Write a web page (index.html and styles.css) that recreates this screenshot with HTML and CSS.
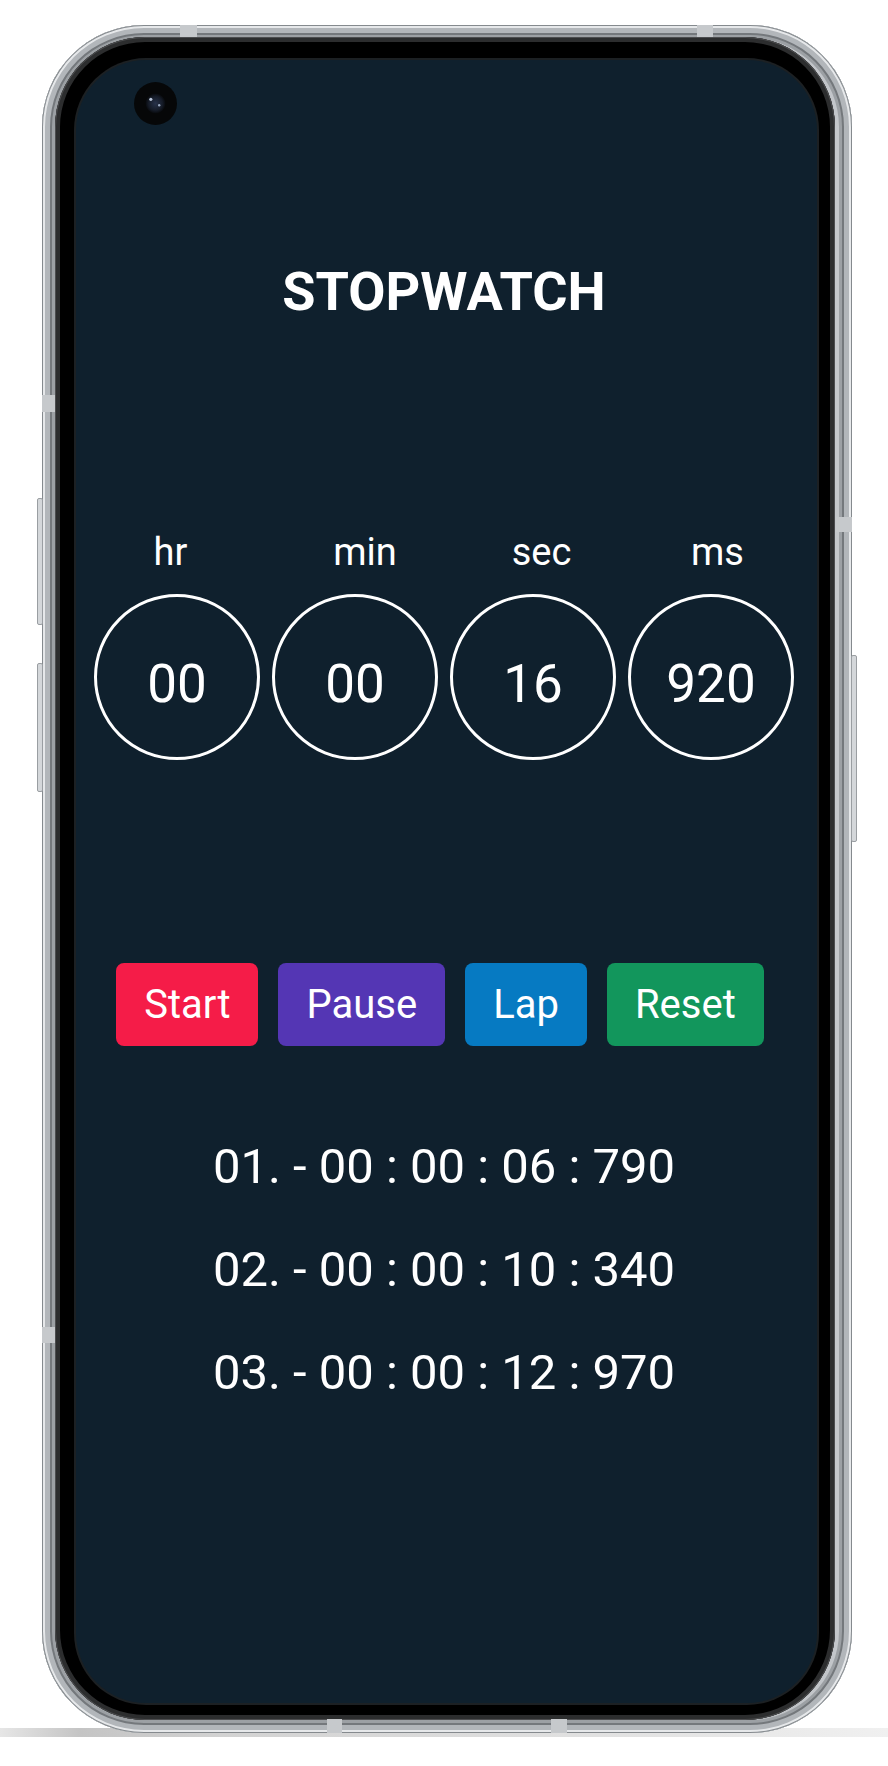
FILE: index.html
```html
<!DOCTYPE html>
<html lang="en">
<head>
<meta charset="utf-8">
<title>Stopwatch</title>
<link rel="stylesheet" href="styles.css">
</head>
<body>
<div class="floor"></div>
<div class="stage">
  <div class="phone">
    <span class="key key-l1"></span>
    <span class="key key-l2"></span>
    <span class="key key-r1"></span>
    <span class="band band-t1"></span>
    <span class="band band-t2"></span>
    <span class="band band-b1"></span>
    <span class="band band-b2"></span>
    <span class="band band-l1"></span>
    <span class="band band-l2"></span>
    <span class="band band-r1"></span>
    <div class="bezel">
      <main class="screen">
        <div class="camera">
          <svg width="43" height="43" viewBox="0 0 43 43">
            <defs>
              <radialGradient id="lens" cx="50%" cy="50%" r="50%">
                <stop offset="0%" stop-color="#27324a"/>
                <stop offset="70%" stop-color="#151b27"/>
                <stop offset="100%" stop-color="#07090c"/>
              </radialGradient>
            </defs>
            <circle cx="21.5" cy="21.5" r="21.5" fill="#060708"/>
            <circle cx="21.5" cy="21.5" r="10" fill="url(#lens)"/>
            <circle cx="16.8" cy="17.3" r="1.6" fill="#b8c4d8"/>
            <circle cx="25.2" cy="23.2" r="1.2" fill="#9aa8c0"/>
          </svg>
        </div>
        <h1 class="title">STOPWATCH</h1>
        <div class="labels">
          <span class="label label-hr">hr</span>
          <span class="label label-min">min</span>
          <span class="label label-sec">sec</span>
          <span class="label label-ms">ms</span>
        </div>
        <div class="dials">
          <div class="dial">00</div>
          <div class="dial">00</div>
          <div class="dial">16</div>
          <div class="dial">920</div>
        </div>
        <div class="controls">
          <button class="btn btn-start">Start</button>
          <button class="btn btn-pause">Pause</button>
          <button class="btn btn-lap">Lap</button>
          <button class="btn btn-reset">Reset</button>
        </div>
        <ol class="laps">
          <li>01. - 00 : 00 : 06 : 790</li>
          <li>02. - 00 : 00 : 10 : 340</li>
          <li>03. - 00 : 00 : 12 : 970</li>
        </ol>
      </main>
    </div>
  </div>
</div>
</body>
</html>
```

FILE: styles.css
```css
* { box-sizing: border-box; }

html, body { margin: 0; padding: 0; }

body {
  width: 888px;
  height: 1766px;
  background: #ffffff;
  position: relative;
  overflow: hidden;
  font-family: Roboto, "Liberation Sans", sans-serif;
}

.floor {
  position: absolute;
  left: 0;
  right: 0;
  top: 1728px;
  height: 9px;
  background: linear-gradient(to right, #e6e6e6 0%, #c4c4c4 9%, #d2d2d2 25%, #e2e2e2 70%, #f0f0f0 100%);
}

.stage {
  position: relative;
  padding: 25px 0 0 42px;
}

.phone {
  position: relative;
  width: 810px;
  height: 1708px;
  border-radius: 102px;
  padding: 12px 17px 13px 13px;
  background: linear-gradient(90deg, #c4c7cb 0%, #a9adb1 50%, #c4c7cb 100%);
  box-shadow:
    inset 0 0 0 1px #858a8e,
    inset 0 0 0 3px #e6e8ea,
    inset 0 0 0 8px #b2b6ba,
    inset 0 0 0 10px #74787c,
    inset 0 0 0 13px #9ca0a4;
}

.key {
  position: absolute;
  width: 6px;
  border-radius: 2px;
  background: #d4d7da;
  border: 1px solid #9a9ea2;
}
.key-l1 { left: -5px; top: 473px; height: 127px; }
.key-l2 { left: -5px; top: 638px; height: 129px; }
.key-r1 { right: -5px; top: 630px; height: 187px; }

.band {
  position: absolute;
  background: #c6c9cc;
}
.band-t1 { top: 0; left: 138px; width: 17px; height: 12px; }
.band-t2 { top: 0; left: 655px; width: 16px; height: 12px; }
.band-b1 { bottom: 0; left: 285px; width: 15px; height: 14px; }
.band-b2 { bottom: 0; left: 509px; width: 16px; height: 14px; }
.band-l1 { left: 0; top: 370px; width: 13px; height: 17px; }
.band-l2 { left: 0; top: 1302px; width: 13px; height: 16px; }
.band-r1 { right: 0; top: 492px; width: 16px; height: 15px; }

.bezel {
  height: 100%;
  border-radius: 90px;
  background: #000000;
  padding: 23px 18px 17px 21px;
  box-shadow:
    inset 0 0 0 1px #4c4d4f,
    inset 0 0 0 5px #2c2d2e;
}

.screen {
  position: relative;
  height: 100%;
  border-radius: 70px;
  background: #0f202d;
  box-shadow: 0 0 0 2px #1c2023;
  display: flex;
  flex-direction: column;
  align-items: center;
  padding: 202px 5px 0 0;
  color: #ffffff;
}

.camera {
  position: absolute;
  left: 58px;
  top: 22px;
  width: 43px;
  height: 43px;
}
.camera svg { display: block; }

.title {
  margin: 0;
  font-size: 54px;
  line-height: 60px;
  font-weight: 700;
}

.labels {
  margin-top: 208px;
  display: grid;
  grid-template-columns: repeat(4, 166px);
  column-gap: 12px;
}

.label {
  font-size: 38px;
  line-height: 44px;
  text-align: center;
}
.label-hr { padding-right: 13px; }
.label-min { padding-left: 20px; }
.label-sec { padding-left: 17px; }
.label-ms { padding-left: 13px; }

.dials {
  margin-top: 20px;
  display: grid;
  grid-template-columns: repeat(4, 166px);
  column-gap: 12px;
}

.dial {
  width: 166px;
  height: 166px;
  border: 3px solid #ffffff;
  border-radius: 50%;
  display: flex;
  align-items: center;
  justify-content: center;
  padding-top: 14px;
  font-size: 53px;
}

.controls {
  margin-top: 203px;
  margin-right: 8px;
  display: flex;
  gap: 20px;
}

.btn {
  height: 83px;
  padding: 0 28px;
  border: none;
  border-radius: 8px;
  font-family: Roboto, "Liberation Sans", sans-serif;
  font-size: 40px;
  color: #ffffff;
}
.btn-start { background: #f51c48; }
.btn-pause { background: #5436b4; }
.btn-lap { background: #067ac2; }
.btn-reset { background: #12965c; }

.laps {
  list-style: none;
  margin: 93px 0 0 0;
  padding: 0;
  display: flex;
  flex-direction: column;
  gap: 47px;
  font-size: 49px;
  line-height: 56px;
  text-align: center;
}
```
